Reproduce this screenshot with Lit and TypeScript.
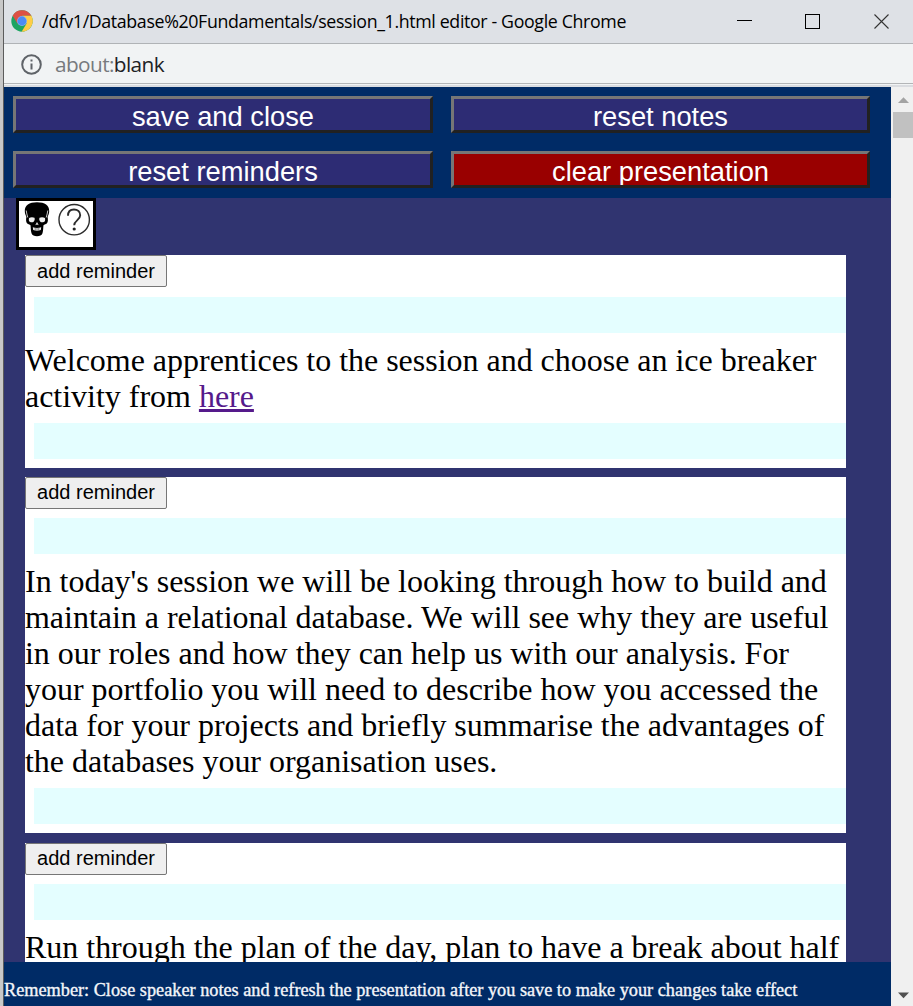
import { LitElement, html, css, svg } from "lit";
import { customElement, property } from "lit/decorators.js";

@customElement("window-bar")
class WindowBar extends LitElement {
  static styles = css`
    :host { display: block; font-family: "Open Sans", "Noto Sans", sans-serif; }
    .title { display: flex; align-items: center; height: 43px; background: #dee1e6; border-bottom: 1px solid #b0b3b6; padding-left: 7px; box-sizing: content-box; }
    .logo { width: 22px; height: 22px; flex: none; margin-top: -2px; }
    .name { flex: 1; margin: -2px 0 0 9px; font-size: 17.8px; color: #000; white-space: nowrap; }
    .name span { letter-spacing: -0.36px; }
    .ctl { flex: none; width: 176px; height: 43px; }
    .address { display: flex; align-items: center; height: 39px; background: #f1f3f4; border-bottom: 1px solid #b3b5b7; padding-left: 16px; }
    .info { width: 22px; height: 22px; flex: none; }
    .url { margin-left: 13px; font-size: 20.8px; color: #202124; white-space: nowrap; letter-spacing: -0.6px; }
    .scheme { color: #777a7e; }
    .edge { height: 2px; border-top: 1px solid #f1f3f4; background: #dadce0; }
  `;
  render() {
    return html`
      <div class="title">
        <svg class="logo" viewBox="0 0 22 22">
          <circle cx="11" cy="11" r="10.7" fill="#1da462" />
          <path d="M11 11 L1.7 5.7 A10.7 10.7 0 0 1 20.4 5.8 L11 5.8Z" fill="#dd5144" />
          <path d="M11 5.8 H20.4 A10.7 10.7 0 0 1 10.6 21.7 L15.6 13.5Z" fill="#ffcd46" />
          <path d="M1.7 5.7 L6.4 13.6 L11 11 V5.8Z" fill="#dd5144" />
          <circle cx="11" cy="11" r="4.9" fill="#8fb2ee" />
          <circle cx="11" cy="11" r="4.4" fill="#4c8bf5" />
        </svg>
        <div class="name"><span>/dfv1/Database%20Fundamentals/session_1.html editor - Google Chrome</span></div>
        <svg class="ctl" viewBox="0 0 176 43" fill="none" stroke="#000" stroke-width="1">
          <path d="M0 20.5H15" />
          <rect x="68.5" y="14.5" width="14" height="14" />
          <path d="M137.5 14.5L151.5 28.5M151.5 14.5L137.5 28.5" stroke="#333" stroke-width="1.1" />
        </svg>
      </div>
      <div class="address">
        <svg class="info" viewBox="0 0 22 22">
          <circle cx="11.5" cy="11.5" r="9.3" fill="none" stroke="#5f6368" stroke-width="2" />
          <path d="M10.5 10.5h2v6h-2zM10.5 6.5h2v2h-2z" fill="#5f6368" />
        </svg>
        <div class="url"><span class="scheme">about:</span>blank</div>
      </div>
      <div class="edge"></div>
    `;
  }
}

@customElement("note-card")
class NoteCard extends LitElement {
  @property({ attribute: false }) content: unknown = "";
  static styles = css`
    :host { display: block; background: #fff; padding-bottom: 9px; }
    .top { height: 41.4px; }
    button { display: block; box-sizing: border-box; width: 142px; height: 32px; padding: 0; border: 1px solid #767676; border-radius: 2px; background: #efefef; color: #000; font: 20px "Liberation Sans", Arial, sans-serif; }
    .slot { height: 36px; margin-left: 9px; background: #e4feff; }
    .text { margin: 9px 0; font: 32px/36px "Liberation Serif", "Times New Roman", serif; letter-spacing: -0.02px; color: #000; white-space: pre; }
    a { color: #551a8b; text-decoration: underline; text-decoration-thickness: 3px; text-underline-offset: 2px; text-decoration-skip-ink: none; }
  `;
  render() {
    return html`
      <div class="top"><button>add reminder</button></div>
      <div class="slot"></div>
      <div class="text">${this.content}</div>
      <div class="slot"></div>
    `;
  }
}

const NOTES = [
  html`Welcome apprentices to the session and choose an ice breaker<br>activity from <a href="#">here</a>`,
  html`In today's session we will be looking through how to build and<br>maintain a relational database. We will see why they are useful<br>in our roles and how they can help us with our analysis. For<br>your portfolio you will need to describe how you accessed the<br>data for your projects and briefly summarise the advantages of<br>the databases your organisation uses.`,
  html`Run through the plan of the day, plan to have a break about half`,
];

const skull = svg`
  <path fill="#000" d="M13 .3C5 .3 .8 3.500 .8 9c0 2.500.9 4 1.600 6-.5 2.500-.5 5 .8 6.500 1.300.9 2.600.9 3.300 1.700.4 2 .1 5 1 8 .9 2.200 2.700 3 5.500 3s4.600-.8 5.500-3c.9-3 .6-6 1-8 .7-.8 2-.8 3.300-1.700 1.300-1.500 1.300-4 .8-6.500.7-2 1.600-3.500 1.600-6C25.200 3.500 21 .3 13 .3z" />
  <path fill="#eee" d="M5 16c1.700-1 4-1 5.500-.2.600 1.500.1 3.200-1.100 4.100-1.500.6-3.400.3-4.200-.7-.5-1-.4-2.100-.2-3.200zM21 16c-1.700-1-4-1-5.500-.2-.6 1.500-.1 3.200 1.100 4.100 1.500.6 3.400.3 4.200-.7.500-1 .4-2.100.2-3.200zM13 20l-1.700 3.200 1.700-.6 1.700.6zM8.800 25.300c2.700.8 5.700.8 8.400 0l-.4 2.700c-2.300.9-5.300.9-7.600 0z" />
  <path stroke="#ddd" stroke-width=".9" fill="none" d="M2.200 8.500c.2 2.500 1 4.500 1.600 7M23.800 8.500c-.2 2.500-1 4.500-1.600 7" />
  <path stroke="#333" stroke-width=".6" d="M11.200 25.500v3M13 25.500v3M14.800 25.500v3" />
`;

@customElement("app-root")
class AppRoot extends LitElement {
  static styles = css`
    :host { display: flex; box-sizing: border-box; width: 913px; height: 1006px; overflow: hidden; }
    .behind { flex: none; width: 3px; background: #c8c8c8; border-right: 1px solid #5c5c5c; }
    .window { flex: 1; min-width: 0; display: flex; flex-direction: column; }
    .page { flex: 1; min-height: 0; display: flex; }
    .main { width: 887px; display: flex; flex-direction: column; background: #303470; }
    .actions { flex: none; box-sizing: border-box; height: 111px; padding: 9px 21px 0 9px; background: #002b66; display: grid; grid-template-columns: 420px 419px; grid-auto-rows: 37px; gap: 18px; }
    .actions button { box-sizing: border-box; border: 3px solid; border-color: #767676 #212121 #212121 #767676; padding: 2px 0 0; background: #2d2c74; color: #fff; font: 27.3px/31px "Liberation Sans", Arial, sans-serif; overflow: hidden; }
    .actions .danger { background: #990000; }
    .tools { flex: none; box-sizing: border-box; width: 80px; height: 52px; margin-left: 12px; border: 3px solid #000; background: #fff; display: flex; gap: 7px; padding: 1px 0 0 5px; }
    .skull { width: 26px; height: 35px; }
    .help { width: 34px; height: 34px; margin-top: 1px; }
    .notes { flex: 1; min-height: 0; overflow: hidden; padding: 5.2px 0 0 21px; display: flex; flex-direction: column; gap: 9.4px; }
    note-card { flex: none; width: 821px; }
    .foot { flex: none; box-sizing: border-box; height: 44px; padding-top: 17px; background: #002b66; color: #f4f6fa; font: 18.25px/22px "Liberation Serif", "Times New Roman", serif; white-space: nowrap; -webkit-text-stroke: .35px #f4f6fa; }
    .scroll { flex: 1; box-sizing: border-box; background: #f0f0f0; padding: 10px 0 7px 2px; display: flex; flex-direction: column; }
    .arrow { width: 20px; height: 7px; flex: none; }
    .thumb { height: 26px; margin-top: 8px; background: #c1c1c1; }
    .track { flex: 1; }
  `;
  render() {
    return html`
      <div class="behind"></div>
      <div class="window">
        <window-bar></window-bar>
        <div class="page">
          <div class="main">
            <div class="actions">
              <button>save and close</button>
              <button>reset notes</button>
              <button>reset reminders</button>
              <button class="danger">clear presentation</button>
            </div>
            <div class="tools">
              <svg class="skull" viewBox="0 0 26 35">${skull}</svg>
              <svg class="help" viewBox="0 0 34 34" fill="none" stroke="#2c2c2c" stroke-width="1.4">
                <circle cx="17.2" cy="16.7" r="15.2" />
                <path d="M11 12.800C11 8.600 13.500 6.500 17 6.500s6.200 2.300 6.200 5.700c0 5-6 5.300-6 10" stroke-width="1.900" />
                <circle cx="17.2" cy="26" r="1.6" fill="#222" stroke="none" />
              </svg>
            </div>
            <div class="notes">${NOTES.map((n) => html`<note-card .content=${n}></note-card>`)}</div>
            <div class="foot">Remember: Close speaker notes and refresh the presentation after you save to make your changes take effect</div>
          </div>
          <div class="scroll">
            <svg class="arrow" viewBox="0 0 20 7"><path d="M5 6L10.500 .3L16 6z" fill="#a3a3a3" /></svg>
            <div class="thumb"></div>
            <div class="track"></div>
            <svg class="arrow" viewBox="0 0 20 7"><path d="M5 .5L10.500 6.200L16 .5z" fill="#505050" /></svg>
          </div>
        </div>
      </div>
    `;
  }
}
